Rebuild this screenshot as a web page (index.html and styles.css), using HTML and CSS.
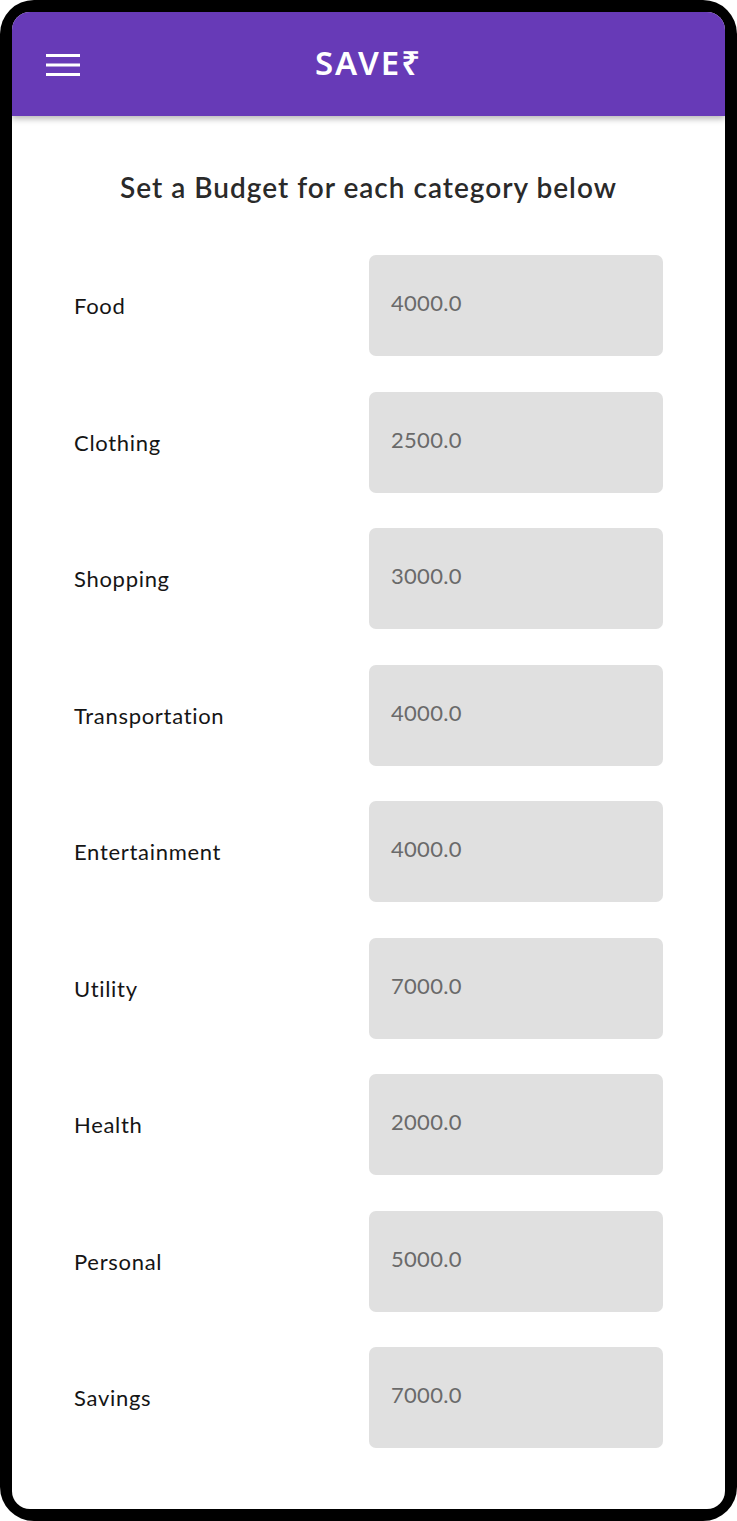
FILE: index.html
```html
<!DOCTYPE html>
<html>
<head>
<meta charset="utf-8">
<link rel="stylesheet" href="styles.css">
</head>
<body>
<div class="phone">
  <div class="screen">
    <header class="appbar">
      <svg class="menu" width="34" height="24" viewBox="0 0 34 24">
        <rect x="0" y="1" width="34" height="3" fill="#fff"/>
        <rect x="0" y="10.5" width="34" height="3" fill="#fff"/>
        <rect x="0" y="20" width="34" height="3" fill="#fff"/>
      </svg>
      <div class="title">SAVE₹</div>
    </header>
    <main class="content">
      <h1 class="heading">Set a Budget for each category below</h1>
      <div class="rows">
        <div class="row"><span class="label">Food</span><div class="field">4000.0</div></div>
        <div class="row"><span class="label">Clothing</span><div class="field">2500.0</div></div>
        <div class="row"><span class="label">Shopping</span><div class="field">3000.0</div></div>
        <div class="row"><span class="label">Transportation</span><div class="field">4000.0</div></div>
        <div class="row"><span class="label">Entertainment</span><div class="field">4000.0</div></div>
        <div class="row"><span class="label">Utility</span><div class="field">7000.0</div></div>
        <div class="row"><span class="label">Health</span><div class="field">2000.0</div></div>
        <div class="row"><span class="label">Personal</span><div class="field">5000.0</div></div>
        <div class="row"><span class="label">Savings</span><div class="field">7000.0</div></div>
      </div>
    </main>
  </div>
</div>
</body>
</html>
```
FILE: styles.css
```css
* { box-sizing: border-box; }
html, body { margin: 0; padding: 0; background: #fff; }
body { font-family: "Lato", "Noto Sans", sans-serif; }
.phone {
  width: 737px;
  height: 1521px;
  background: #000;
  border-radius: 34px;
  padding: 12px;
}
.screen {
  width: 713px;
  height: 1497px;
  background: #fff;
  border-radius: 18px;
  overflow: hidden;
  display: flex;
  flex-direction: column;
}
.appbar {
  height: 104px;
  flex: none;
  background: #673AB7;
  display: flex;
  align-items: center;
  position: relative;
  padding-left: 34px;
  box-shadow: 0 3px 6px rgba(0,0,0,0.28);
  z-index: 1;
}
.menu { display: block; margin-top: 2px; }
.title {
  position: absolute;
  left: 0; right: 0; top: 0; bottom: 0;
  display: flex;
  align-items: center;
  justify-content: center;
  color: #fff;
  font-family: "Noto Sans", "Lato", sans-serif;
  font-weight: 600;
  font-size: 33px;
  letter-spacing: 2px;
  padding-bottom: 4px;
}
.content {
  padding: 53px 62px 0 62px;
}
.heading {
  margin: 0;
  text-align: center;
  font-size: 28px;
  line-height: 36px;
  font-weight: 600;
  letter-spacing: 1px;
  color: #2a2a2a;
}
.rows {
  margin-top: 50px;
  display: flex;
  flex-direction: column;
  gap: 35.5px;
}
.row {
  display: flex;
  align-items: center;
  justify-content: space-between;
  height: 101px;
}
.label {
  font-size: 22px;
  letter-spacing: 0.7px;
  color: #151515;
}
.field {
  width: 294px;
  height: 101px;
  background: #E0E0E0;
  border-radius: 7px;
  display: flex;
  align-items: center;
  padding-left: 22px;
  padding-bottom: 6px;
  font-size: 22px;
  letter-spacing: 0.3px;
  color: #6a6a6a;
}
```
